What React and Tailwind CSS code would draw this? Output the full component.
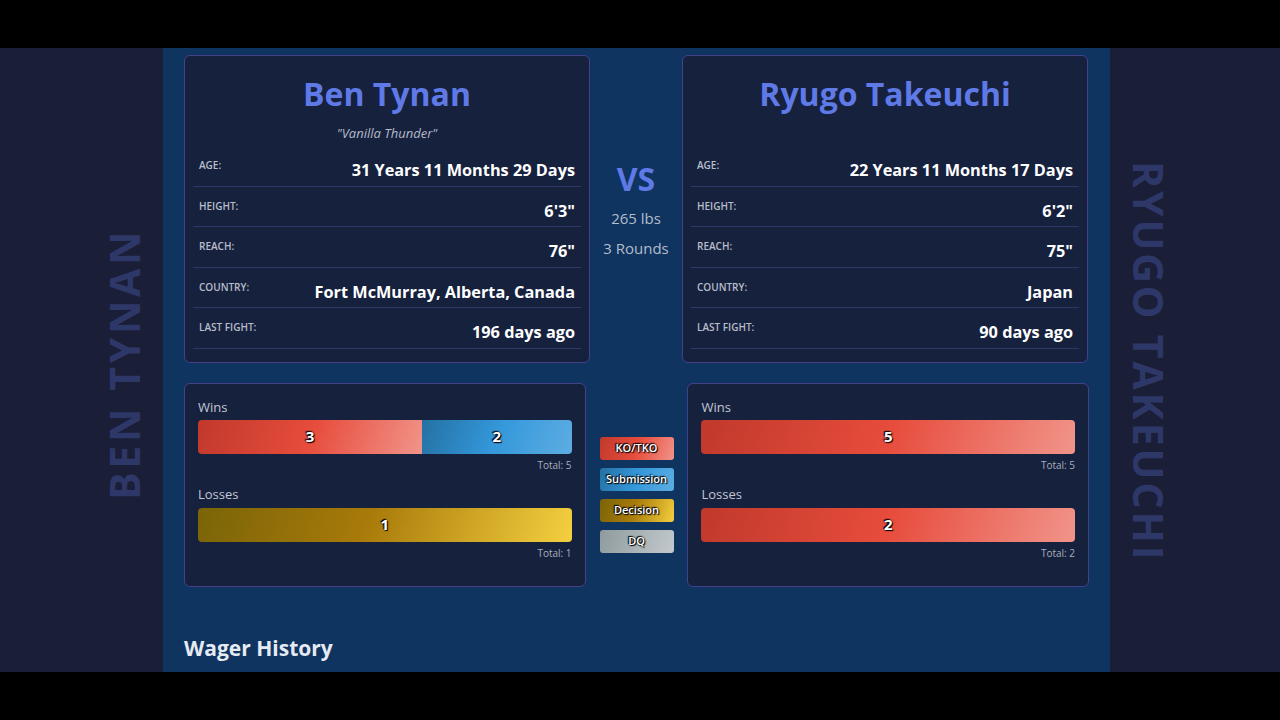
import React from "react";

const fighters = [
  {
    name: "Ben Tynan",
    nickname: "Vanilla Thunder",
    rows: [
      ["Age:", "31 Years 11 Months 29 Days"],
      ["Height:", "6'3\""],
      ["Reach:", "76\""],
      ["Country:", "Fort McMurray, Alberta, Canada"],
      ["Last Fight:", "196 days ago"],
    ],
    wins: [
      { n: 3, type: "ko" },
      { n: 2, type: "sub" },
    ],
    losses: [{ n: 1, type: "dec" }],
  },
  {
    name: "Ryugo Takeuchi",
    nickname: "",
    rows: [
      ["Age:", "22 Years 11 Months 17 Days"],
      ["Height:", "6'2\""],
      ["Reach:", "75\""],
      ["Country:", "Japan"],
      ["Last Fight:", "90 days ago"],
    ],
    wins: [{ n: 5, type: "ko" }],
    losses: [{ n: 2, type: "ko" }],
  },
];

const grad = {
  ko: "bg-[linear-gradient(110deg,#c0392b_0%,#e74c3c_50%,#f1948a_100%)]",
  sub: "bg-[linear-gradient(110deg,#2471a3_0%,#3498db_50%,#5dade2_100%)]",
  dec: "bg-[linear-gradient(110deg,#7a6408_0%,#a87a0a_45%,#f4d03f_100%)]",
  dq: "bg-[linear-gradient(110deg,#8e9a9c_0%,#a9b3b6_50%,#c3c9cc_100%)]",
};

const outline = "[text-shadow:0_0_2px_#000,1px_1px_1px_#000,-1px_-1px_1px_#000]";

const FighterCard = ({ f }) => (
  <div className="w-[406px] bg-[#16213e] border border-[#45408c] rounded-md px-2 pt-[18px] pb-[13px]">
    <h2 className="text-center text-[32px] leading-[40px] font-bold text-[#5f7ae6]">{f.name}</h2>
    <p className="mt-[9px] mb-[3px] h-[20px] text-center text-[13px] leading-[20px] italic text-[#b4b9c8]">
      {f.nickname ? `"${f.nickname}"` : ""}
    </p>
    {f.rows.map(([label, value]) => (
      <div
        key={label}
        className="h-[40.5px] flex justify-between items-start pt-[12px] px-[6px] border-b border-[#2f3768]"
      >
        <span className="text-[10px] leading-[15px] uppercase font-semibold text-[#b8bdca]">{label}</span>
        <span className="text-[16.3px] leading-[24px] font-bold text-white">{value}</span>
      </div>
    ))}
  </div>
);

const Bar = ({ parts }) => {
  const total = parts.reduce((s, p) => s + p.n, 0);
  return (
    <div className="flex h-[34px] rounded overflow-hidden">
      {parts.map((p, i) => (
        <div
          key={i}
          className={`${grad[p.type]} flex items-center justify-center text-[15px] font-bold text-white ${outline}`}
          style={{ width: `${(p.n / total) * 100}%` }}
        >
          {p.n}
        </div>
      ))}
    </div>
  );
};

const StatCard = ({ f }) => {
  const winTotal = f.wins.reduce((s, p) => s + p.n, 0);
  const lossTotal = f.losses.reduce((s, p) => s + p.n, 0);
  return (
    <div className="w-[402px] h-[204px] bg-[#16213e] border border-[#45408c] rounded-md px-[13px] pt-[13px]">
      <div className="text-[13px] leading-[20px] text-[#c3c7d3]">Wins</div>
      <div className="mt-[3px]">
        <Bar parts={f.wins} />
      </div>
      <div className="mt-[3px] text-right text-[10px] leading-[16px] text-[#a9aebd]">Total: {winTotal}</div>
      <div className="mt-[11px] text-[13px] leading-[20px] text-[#c3c7d3]">Losses</div>
      <div className="mt-[4px]">
        <Bar parts={f.losses} />
      </div>
      <div className="mt-[3px] text-right text-[10px] leading-[16px] text-[#a9aebd]">Total: {lossTotal}</div>
    </div>
  );
};

const Legend = () => (
  <div className="w-[102px] flex flex-col items-center gap-[8px] pt-[54px]">
    {[
      ["KO/TKO", "ko"],
      ["Submission", "sub"],
      ["Decision", "dec"],
      ["DQ", "dq"],
    ].map(([label, type]) => (
      <div
        key={label}
        className={`${grad[type]} w-[74px] h-[23px] rounded-[3px] flex items-center justify-center text-[11px] font-semibold text-white ${outline}`}
      >
        {label}
      </div>
    ))}
  </div>
);

export default function App() {
  return (
    <div className="w-[1280px] h-[720px] bg-black overflow-hidden font-['Open_Sans',sans-serif]">
      <div className="mt-[48px] h-[624px] flex">
        {/* left side */}
        <div className="w-[163px] bg-[#1b1e37] flex items-center justify-end pr-[18px]">
          <span className="[writing-mode:vertical-rl] rotate-180 translate-y-[4px] text-[41px] leading-none font-bold tracking-[0.09em] text-[#2d3868]">
            BEN TYNAN
          </span>
        </div>

        {/* main */}
        <div className="w-[947px] bg-[#0f3460] px-[21px] pt-[7px]">
          <div className="flex">
            <FighterCard f={fighters[0]} />
            <div className="w-[92px] flex flex-col items-center justify-center">
              <div className="text-[32px] leading-[40px] font-bold text-[#5f7ae6]">VS</div>
              <div className="mt-[8px] text-[15px] leading-[22px] text-[#b3bccb]">265 lbs</div>
              <div className="mt-[8px] text-[15px] leading-[22px] text-[#b3bccb]">3 Rounds</div>
            </div>
            <FighterCard f={fighters[1]} />
          </div>

          <div className="mt-[20px] flex">
            <StatCard f={fighters[0]} />
            <Legend />
            <StatCard f={fighters[1]} />
          </div>

          <h3 className="mt-[47px] text-[21px] leading-[28px] font-bold text-[#e6eaf2]">Wager History</h3>
        </div>

        {/* right side */}
        <div className="w-[170px] bg-[#1b1e37] flex items-center justify-start pl-[18px]">
          <span className="[writing-mode:vertical-rl] translate-y-[2px] text-[41px] leading-none font-bold tracking-[0.07em] text-[#2d3868]">
            RYUGO TAKEUCHI
          </span>
        </div>
      </div>
    </div>
  );
}
